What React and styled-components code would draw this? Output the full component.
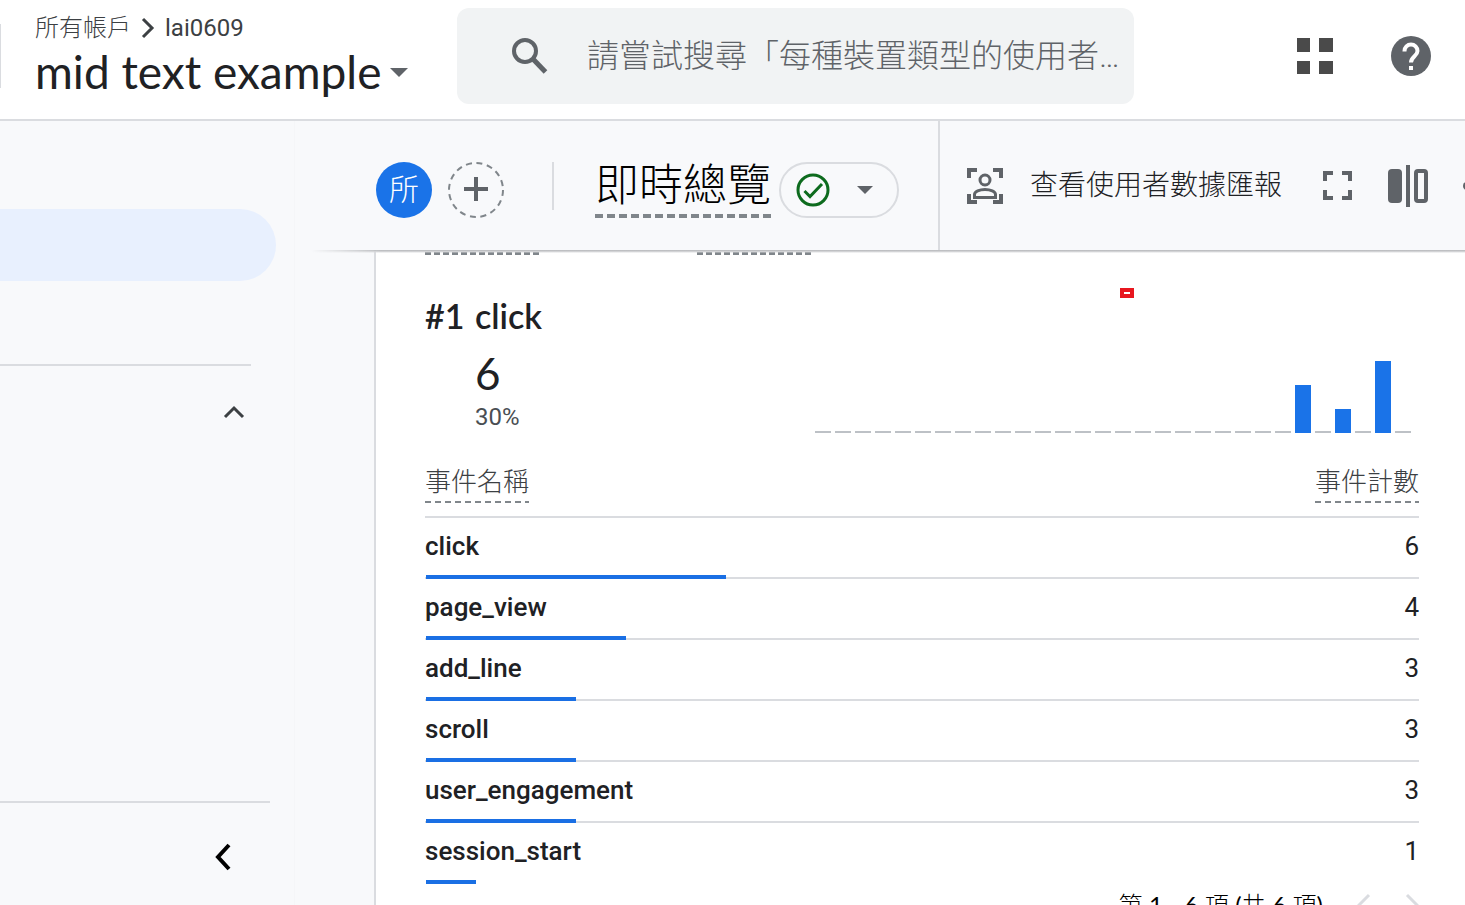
import React from "react";
import styled, { createGlobalStyle } from "styled-components";

const cjk = `"Noto Sans CJK TC", sans-serif`;

const Global = createGlobalStyle`
  *, *::before, *::after { box-sizing: border-box; }
  body { margin: 0; background: #fff; color: #202124; font-family: Roboto, ${cjk}; }
  button { border: 0; padding: 0; background: none; color: inherit; font: inherit; cursor: pointer; }
  h1, h2, p { margin: 0; font-weight: inherit; }
  svg { display: block; flex: none; }
`;

const Page = styled.div`
  display: flex;
  flex-direction: column;
  height: 100vh;
  overflow: hidden;
`;

const Header = styled.header`
  display: flex;
  align-items: flex-start;
  flex: none;
  padding: 8px 34px 15px 0;
  border-bottom: 2px solid #dadce0;
`;

const Account = styled.div`
  flex: 0 0 457px;
  display: flex;
  align-items: center;
  gap: 34px;
  height: 96px;
`;

const LogoDivider = styled.span`
  width: 1px;
  height: 64px;
  background: #dadce0;
`;

const AccountText = styled.div`
  display: flex;
  flex-direction: column;
`;

const Breadcrumb = styled.nav`
  display: flex;
  align-items: center;
  height: 32px;
  gap: 10px;
  font: 300 24px/32px Roboto, ${cjk};
  color: #3c4043;
  a { color: inherit; text-decoration: none; }
`;

const AccountName = styled.span`
  font-weight: 400;
`;

const PropertyButton = styled.button`
  display: flex;
  align-items: center;
  gap: 9px;
  white-space: nowrap;
  font: 400 46px/56px Lato, ${cjk};
`;

const Search = styled.label`
  flex: 1;
  min-width: 0;
  display: flex;
  align-items: center;
  height: 96px;
  padding: 0 4px 0 54px;
  gap: 39px;
  border-radius: 12px;
  background: #f1f3f4;
`;

const SearchInput = styled.input`
  flex: 1;
  min-width: 0;
  height: 48px;
  padding: 0;
  border: 0;
  outline: 0;
  background: transparent;
  font: 300 32px/48px Roboto, ${cjk};
  text-overflow: ellipsis;
  &::placeholder { color: #5f6368; opacity: 1; }
`;

const HeaderActions = styled.div`
  display: flex;
  align-items: center;
  justify-content: flex-end;
  gap: 58px;
  flex: 0 0 297px;
  height: 96px;
`;

const Body = styled.div`
  flex: 1;
  min-height: 0;
  display: flex;
  background: #f8f9fb;
`;

const Sidebar = styled.aside`
  flex: 0 0 295px;
  display: flex;
  flex-direction: column;
  border-right: 1px solid #f5f6f8;
`;

const ActiveItem = styled.a`
  height: 72px;
  margin: 88px 18px 0 0;
  border-radius: 0 36px 36px 0;
  background: #e8f0fe;
`;

const SideSection = styled.div`
  margin: ${(p) => (p.$bottom ? "auto 24px 0 0" : "83px 43px 0 0")};
  height: ${(p) => (p.$bottom ? "104px" : "auto")};
  padding-top: ${(p) => (p.$bottom ? "40px" : "38px")};
  border-top: 2px solid #dadce0;
  display: flex;
  justify-content: flex-end;
  align-items: flex-start;
  padding-right: ${(p) => (p.$bottom ? "38px" : "6px")};
`;

const Main = styled.main`
  flex: 1;
  min-width: 0;
  display: flex;
  flex-direction: column;
`;

const Toolbar = styled.div`
  position: relative;
  z-index: 1;
  flex: none;
  display: flex;
  height: 129px;
  padding-left: 81px;
  &::after {
    content: "";
    position: absolute;
    top: 100%;
    left: 16px;
    right: 0;
    height: 3px;
    background: linear-gradient(#b4b6b9, #d8d9db 60%, transparent);
    mask-image: linear-gradient(to right, transparent, #000 70px);
  }
`;

const ToolbarLeft = styled.div`
  flex: 1;
  min-width: 0;
  display: flex;
  align-items: flex-start;
  padding-top: 41px;
`;

const Avatar = styled.button`
  flex: none;
  width: 56px;
  height: 56px;
  padding-bottom: 6px;
  border-radius: 50%;
  background: #1a73e8;
  color: #fff;
  font: 300 30px/48px ${cjk};
`;

const AddButton = styled.button`
  margin-left: 16px;
`;

const Divider = styled.span`
  flex: none;
  width: 2px;
  height: 48px;
  margin: 0 41px 0 48px;
  background: #dadce0;
`;

const dashes = (on, off, h) => `
  background-image: repeating-linear-gradient(to right, #80868b 0 ${on}px, transparent ${on}px ${on + off}px);
  background-repeat: no-repeat;
  background-position: left bottom;
  background-size: 100% ${h}px;
`;

const Title = styled.h1`
  flex: none;
  height: 56px;
  white-space: nowrap;
  font: 300 44px/40px ${cjk};
  color: #000;
  ${dashes(8, 4, 4)}
`;

const StatusButton = styled.button`
  flex: none;
  display: flex;
  align-items: center;
  justify-content: space-between;
  width: 120px;
  height: 56px;
  margin-left: 8px;
  padding: 0 24px 0 15px;
  border: 2px solid #dadce0;
  border-radius: 28px;
`;

const ToolbarRight = styled.div`
  flex: 0 0 527px;
  display: flex;
  align-items: center;
  overflow: hidden;
  border-left: 2px solid #dadce0;
  padding-left: 27px;
  gap: 35px;
  color: #5f6368;
`;

const SnapshotButton = styled.button`
  flex: none;
  display: flex;
  align-items: center;
  gap: 27px;
  margin-right: 6px;
  white-space: nowrap;
  font: 300 28px/34px ${cjk};
  span { color: #202124; padding-bottom: 6px; }
`;

const IconButton = styled.button`
  flex: none;
`;

const Card = styled.section`
  position: relative;
  flex: 1;
  min-height: 0;
  overflow: hidden;
  margin-left: 79px;
  padding: 1px 46px 0 49px;
  border-left: 2px solid #dadce0;
  background: #fff;
`;

const ColumnHints = styled.div`
  display: flex;
  gap: 157px;
`;

const Hint = styled.span`
  width: 115px;
  height: 4px;
  ${dashes(6, 3, 3)}
`;

const Summary = styled.div`
  display: flex;
  justify-content: space-between;
  padding: 42px 8px 0 0;
`;

const TopEvent = styled.div`
  display: grid;
  grid-template-columns: 50px auto;
  align-content: start;
`;

const EventName = styled.h2`
  font: 600 34px/38px Lato, ${cjk};
  white-space: nowrap;
`;

const EventCount = styled.p`
  grid-column: 2;
  padding-top: 14px;
  font: 400 44px/48px Lato, ${cjk};
`;

const EventShare = styled.p`
  grid-column: 2;
  padding-top: 4px;
  font: 400 24px/32px Roboto, ${cjk};
  color: #4a4e53;
`;

const Chart = styled.div`
  display: flex;
  align-items: flex-end;
  gap: 4px;
  height: 136px;
`;

const Bar = styled.span`
  width: 16px;
  height: ${(p) => (p.$value ? p.$value * 24 : 2)}px;
  background: ${(p) => (p.$value ? "#1a73e8" : "#bdc1c6")};
`;

const Marker = styled.span`
  position: absolute;
  top: 38px;
  left: 744px;
  width: 14px;
  height: 10px;
  border: solid #e8171f;
  border-width: 4px;
  background: #fff;
`;

const Table = styled.table`
  width: 100%;
  margin-top: 24px;
  border-collapse: separate;
  border-spacing: 0;
`;

const HeadCell = styled.th`
  height: 61px;
  padding: 0;
  vertical-align: top;
  text-align: ${(p) => (p.$end ? "right" : "left")};
  border-bottom: 2px solid #dadce0;
`;

const HeadLabel = styled.span`
  display: inline-block;
  height: 46px;
  font: 300 26px/46px ${cjk};
  color: #3c4043;
  ${dashes(6, 4, 2)}
`;

const Cell = styled.td`
  height: 61px;
  padding: 0;
  vertical-align: top;
  font: ${(p) => (p.$end ? 400 : 500)} 26px/57px Roboto, ${cjk};
  text-align: ${(p) => (p.$end ? "right" : "left")};
  border-bottom: ${(p) => (p.$last ? "0" : "2px solid #dadce0")};
`;

const CellBar = styled.span`
  display: block;
  position: relative;
  z-index: 1;
  height: 4px;
  margin: 0 0 -2px 1px;
  background: #1a6fe4;
`;

const Pager = styled.footer`
  display: flex;
  justify-content: flex-end;
  align-items: center;
  gap: 34px;
  padding-top: 5px;
  font: 300 24px/32px Lato, ${cjk};
  color: #000;
  button { color: #dadce0; }
`;

const PagerText = styled.span`
  b { font-weight: 400; }
`;

const Caret = ({ w = 18, h = 9 }) => (
  <svg width={w} height={h} viewBox="0 0 18 9" fill="#5f6368"><path d="M0 0h18L9 9z" /></svg>
);

const Chevron = ({ w, h, d, stroke = 3, color = "currentColor" }) => (
  <svg width={w} height={h} fill="none" stroke={color} strokeWidth={stroke}><path d={d} /></svg>
);

const values = Array(30).fill(0);
values[24] = 2;
values[26] = 1;
values[28] = 3;

const events = [
  ["click", 6],
  ["page_view", 4],
  ["add_line", 3],
  ["scroll", 3],
  ["user_engagement", 3],
  ["session_start", 1],
];

export default function App() {
  return (
    <Page>
      <Global />
      <Header>
        <Account>
          <LogoDivider />
          <AccountText>
            <Breadcrumb>
              <a href="#accounts">所有帳戶</a>
              <Chevron w={14} h={22} d="M2 2l9 9-9 9" />
              <AccountName>lai0609</AccountName>
            </Breadcrumb>
            <PropertyButton>mid text example<Caret /></PropertyButton>
          </AccountText>
        </Account>
        <Search>
          <svg width="37" height="37" viewBox="0 0 37 37" fill="none" stroke="#5f6368" strokeWidth="4">
            <circle cx="14" cy="13" r="11" />
            <path d="M22 21l12.500 13" strokeWidth="5" />
          </svg>
          <SearchInput aria-label="搜尋" placeholder="請嘗試搜尋「每種裝置類型的使用者人數」" />
        </Search>
        <HeaderActions>
          <IconButton aria-label="應用程式">
            <svg width="36" height="36" fill="#4a4a4a"><path d="M0 0h13v14H0zM22 0h14v14H22zM0 23h13v13H0zM22 23h14v13H22z" /></svg>
          </IconButton>
          <IconButton aria-label="說明">
            <svg width="40" height="40" viewBox="0 0 40 40">
              <circle cx="20" cy="20" r="20" fill="#5f6368" />
              <path d="M13.500 15.500v-.5a6.500 6.500 0 0 1 13 0c0 5-6.500 5.500-6.500 11.500" fill="none" stroke="#fff" strokeWidth="4" />
              <path d="M18 30h4v4h-4z" fill="#fff" />
            </svg>
          </IconButton>
        </HeaderActions>
      </Header>
      <Body>
        <Sidebar>
          <ActiveItem href="#realtime" aria-label="即時" />
          <SideSection>
            <IconButton aria-label="收合"><Chevron w={22} h={15} color="#3c4043" d="M2 13l9-9 9 9" /></IconButton>
          </SideSection>
          <SideSection $bottom>
            <IconButton aria-label="收合選單"><Chevron w={18} h={28} stroke={4} color="#000" d="M15 2L4 14l11 12" /></IconButton>
          </SideSection>
        </Sidebar>
        <Main>
          <Toolbar>
            <ToolbarLeft>
              <Avatar>所</Avatar>
              <AddButton aria-label="新增比較">
                <svg width="56" height="56" fill="none" stroke="#5f6368">
                  <circle cx="28" cy="28" r="27" stroke="#80868b" strokeWidth="2" strokeDasharray="6 4.600" />
                  <path d="M16 27h24M28 15v24" strokeWidth="4" />
                </svg>
              </AddButton>
              <Divider />
              <Title>即時總覽</Title>
              <StatusButton aria-label="資料狀態">
                <svg width="34" height="34" viewBox="0 0 34 34" fill="none" stroke="#0d6b1e">
                  <circle cx="17" cy="17" r="15" strokeWidth="3" />
                  <path d="M8.500 18l5.500 5.500L26 11" strokeWidth="3" />
                </svg>
                <Caret w={16} h={8} />
              </StatusButton>
            </ToolbarLeft>
            <ToolbarRight>
              <SnapshotButton>
                <svg width="36" height="36" fill="none" stroke="currentColor" strokeWidth="4">
                  <path d="M2 10V2h8M26 2h8v8M34 26v8h-8M10 34H2v-8" />
                  <circle cx="18" cy="12" r="5" strokeWidth="3" />
                  <path d="M7.500 29.500v-3c0-3 5-5 10.500-5s10.500 2 10.500 5v3z" strokeWidth="3" />
                </svg>
                <span>查看使用者數據匯報</span>
              </SnapshotButton>
              <IconButton aria-label="全螢幕">
                <svg width="30" height="29" fill="none" stroke="currentColor" strokeWidth="4"><path d="M2 10V2h8M19 2h8v8M27 19v8h-8M10 27H2v-8" /></svg>
              </IconButton>
              <IconButton aria-label="比較">
                <svg width="40" height="42" fill="currentColor">
                  <rect x="0" y="4" width="14" height="34" rx="4" />
                  <rect x="18" y="0" width="4" height="42" />
                  <rect x="28" y="6" width="10" height="30" rx="2" fill="none" stroke="currentColor" strokeWidth="4" />
                </svg>
              </IconButton>
              <IconButton aria-label="分享">
                <svg width="36" height="36" fill="none" stroke="currentColor" strokeWidth="3"><circle cx="4" cy="18" r="4" fill="currentColor" stroke="none" /><path d="M5 18L28 5M5 18l23 13" /></svg>
              </IconButton>
            </ToolbarRight>
          </Toolbar>
          <Card>
            <ColumnHints><Hint /><Hint /></ColumnHints>
            <Summary>
              <TopEvent>
                <EventName as="span">#1</EventName>
                <EventName>click</EventName>
                <EventCount>6</EventCount>
                <EventShare>30%</EventShare>
              </TopEvent>
              <Chart>{values.map((v, i) => <Bar key={i} $value={v} />)}</Chart>
            </Summary>
            <Marker />
            <Table>
              <thead>
                <tr>
                  <HeadCell><HeadLabel>事件名稱</HeadLabel></HeadCell>
                  <HeadCell $end><HeadLabel>事件計數</HeadLabel></HeadCell>
                </tr>
              </thead>
              <tbody>
                {events.map(([name, count], i) => (
                  <tr key={name}>
                    <Cell $last={i === events.length - 1}>
                      {name}
                      <CellBar style={{ width: count * 50 }} />
                    </Cell>
                    <Cell $end $last={i === events.length - 1}>{count}</Cell>
                  </tr>
                ))}
              </tbody>
            </Table>
            <Pager>
              <PagerText>第 <b>1 - 6</b> 項 <b>(</b>共 <b>6</b> 項<b>)</b></PagerText>
              <IconButton aria-label="上一頁"><Chevron w={14} h={24} d="M12 2L2 12l10 10" /></IconButton>
              <IconButton aria-label="下一頁"><Chevron w={14} h={24} d="M2 2l10 10L2 22" /></IconButton>
            </Pager>
          </Card>
        </Main>
      </Body>
    </Page>
  );
}
